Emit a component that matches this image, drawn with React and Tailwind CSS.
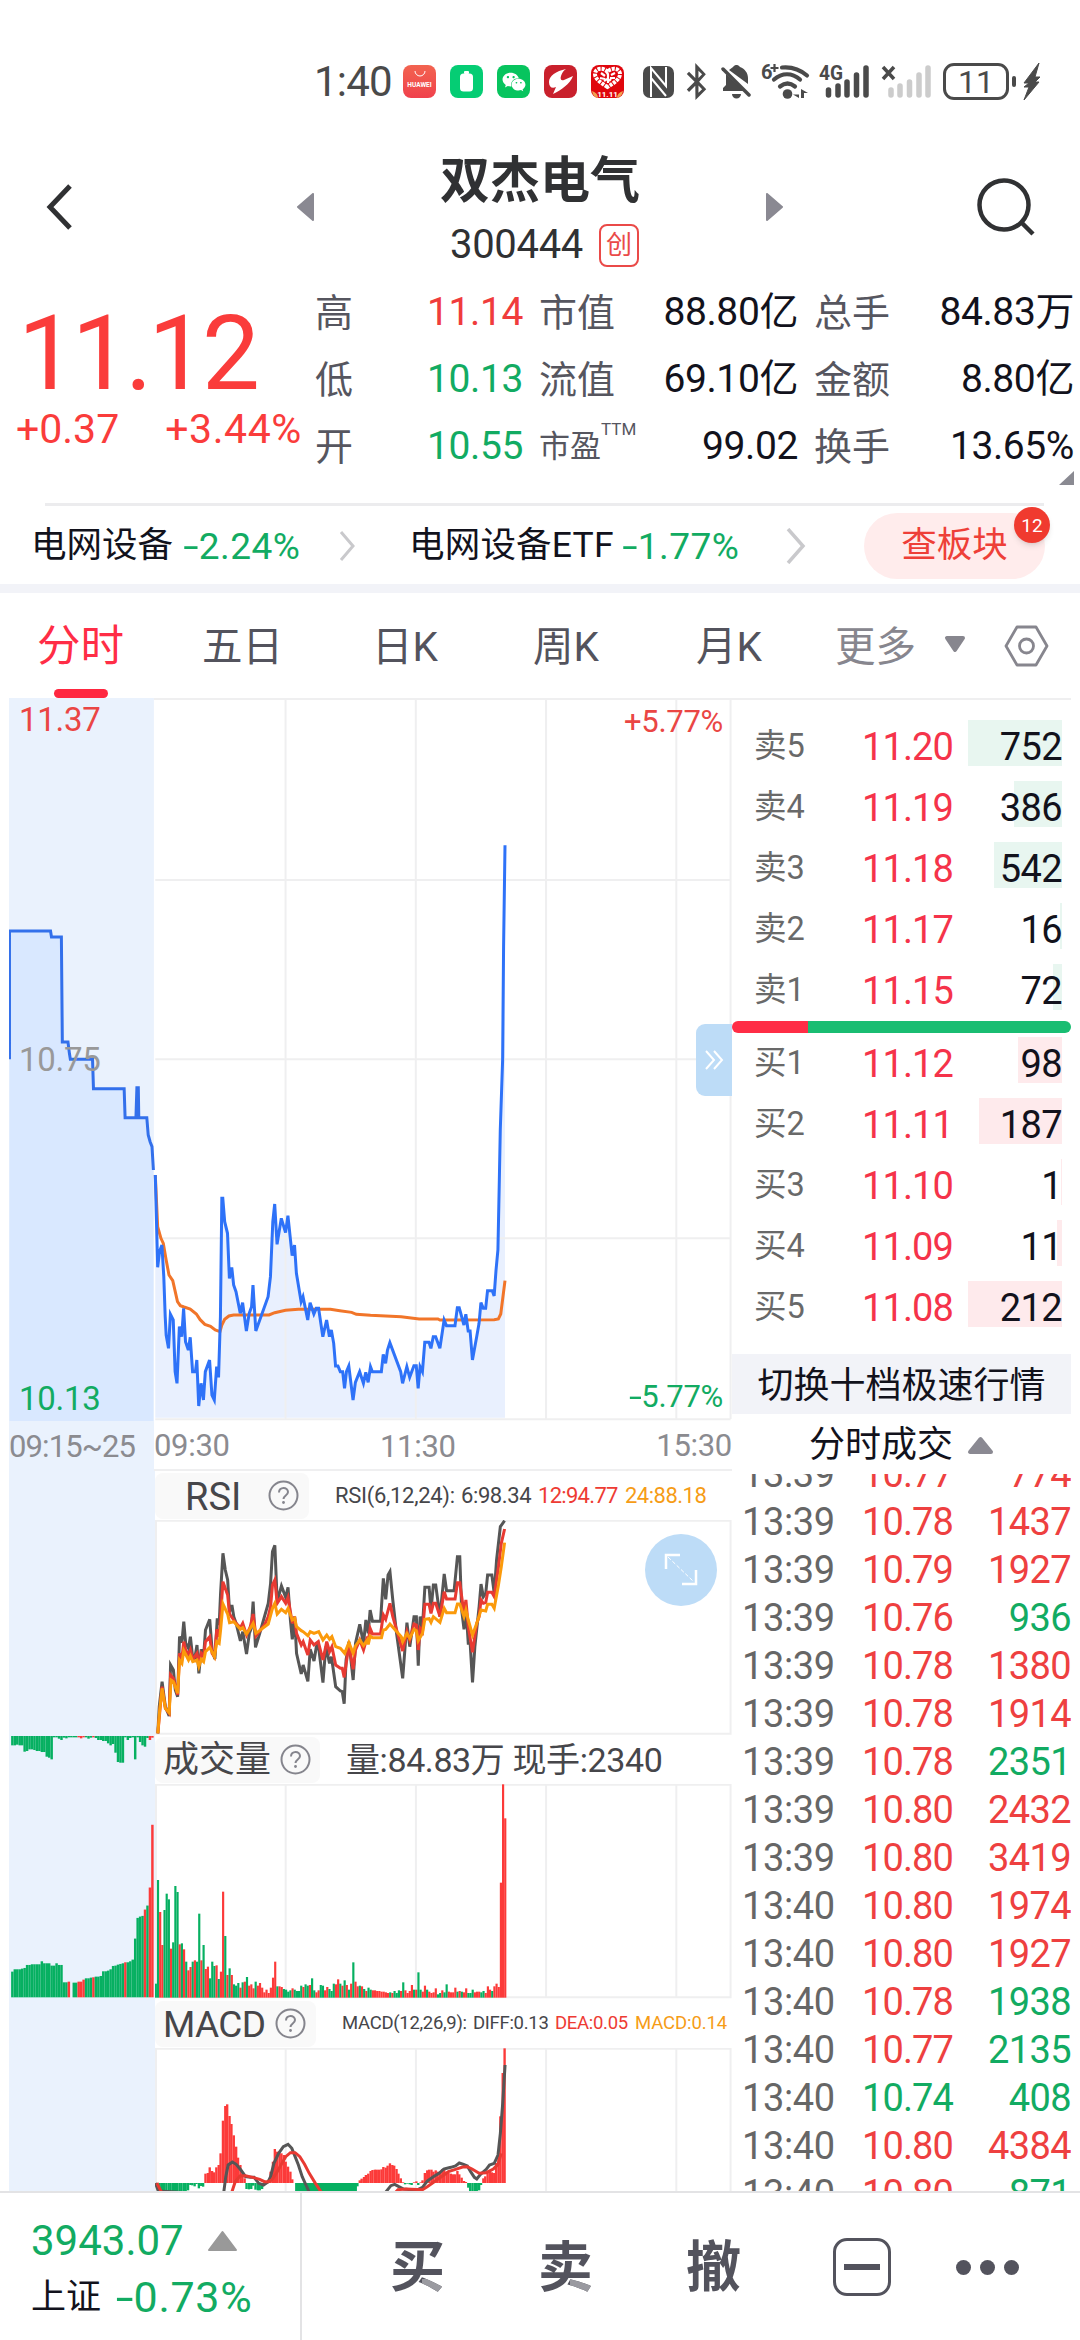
import { FaWeixin, FaBluetoothB } from "react-icons/fa";

const stats = [
  [
    { label: "高", value: "11.14", color: "text-[#f03c3c]" },
    { label: "低", value: "10.13", color: "text-[#12ab62]" },
    { label: "开", value: "10.55", color: "text-[#12ab62]" },
  ],
  [
    { label: "市值", value: "88.80亿", color: "text-[#12121c]" },
    { label: "流值", value: "69.10亿", color: "text-[#12121c]" },
    { label: "市盈", sup: "TTM", value: "99.02", color: "text-[#12121c]" },
  ],
  [
    { label: "总手", value: "84.83万", color: "text-[#12121c]" },
    { label: "金额", value: "8.80亿", color: "text-[#12121c]" },
    { label: "换手", value: "13.65%", color: "text-[#12121c]" },
  ],
];

const sells = [
  { label: "卖5", price: "11.20", volume: 752, bar: 94 },
  { label: "卖4", price: "11.19", volume: 386, bar: 48 },
  { label: "卖3", price: "11.18", volume: 542, bar: 68 },
  { label: "卖2", price: "11.17", volume: 16, bar: 2 },
  { label: "卖1", price: "11.15", volume: 72, bar: 9 },
];

const buys = [
  { label: "买1", price: "11.12", volume: 98, bar: 44 },
  { label: "买2", price: "11.11", volume: 187, bar: 83 },
  { label: "买3", price: "11.10", volume: 1, bar: 1 },
  { label: "买4", price: "11.09", volume: 11, bar: 5 },
  { label: "买5", price: "11.08", volume: 212, bar: 94 },
];

const ticks = [
  ["13:39", "10.77", 774, "r", "r"],
  ["13:39", "10.78", 1437, "r", "r"],
  ["13:39", "10.79", 1927, "r", "r"],
  ["13:39", "10.76", 936, "r", "g"],
  ["13:39", "10.78", 1380, "r", "r"],
  ["13:39", "10.78", 1914, "r", "r"],
  ["13:39", "10.78", 2351, "r", "g"],
  ["13:39", "10.80", 2432, "r", "r"],
  ["13:39", "10.80", 3419, "r", "r"],
  ["13:40", "10.80", 1974, "r", "r"],
  ["13:40", "10.80", 1927, "r", "r"],
  ["13:40", "10.78", 1938, "r", "g"],
  ["13:40", "10.77", 2135, "r", "g"],
  ["13:40", "10.74", 408, "g", "g"],
  ["13:40", "10.80", 4384, "r", "r"],
  ["13:40", "10.80", 871, "r", "g"],
];

const tickColors = { r: "text-[#ee4040]", g: "text-[#12ab62]" };

const RED = "#fc3a39";
const GREEN = "#06b061";

// price chart series, x runs 19..1551
const auctionLine =
  "20,538 20,153 107,153 109,171 130,171 132,486 144,486 147,520 149,538 196,538 198,626 263,626 265,713 288,713 290,623 293,623 294,713 311,713 314,765 318,785 322,800 325,870";

const priceLine =
  "329,135 332,300 334,412 338,365 343,345 347,440 350,560 352,615 357,655 361,553 367,570 371,725 375,760 380,590 385,620 389,535 393,635 399,660 403,622 408,725 414,725 417,690 421,828 426,760 431,810 435,725 444,690 449,795 454,810 459,710 463,742 467,560 470,205 472,205 476,275 482,310 486,445 491,412 495,465 500,485 509,550 514,518 522,603 528,550 533,530 536,465 542,603 568,500 573,440 578,275 582,222 587,343 596,265 605,308 610,257 619,377 624,345 628,430 638,515 642,500 652,570 657,518 665,552 670,535 675,535 684,620 692,570 698,620 702,600 707,640 711,708 716,708 721,725 726,725 730,775 734,725 739,708 748,810 753,757 762,725 770,760 775,727 780,757 785,710 789,725 808,725 812,673 817,700 821,660 826,638 849,725 853,760 862,710 868,742 877,707 882,707 886,775 890,710 895,725 900,637 909,637 913,655 918,620 923,620 932,655 941,570 946,587 964,587 969,533 973,533 983,585 987,553 992,603 996,603 1001,690 1010,620 1015,580 1019,518 1024,535 1029,535 1033,482 1043,482 1047,498 1051,420 1055,360 1058,150 1060,0 1065,-212 1067,-550 1070,-854";

const averageLine =
  "329,135 334,290 341,325 346,340 352,390 358,435 366,452 376,515 382,527 390,531 403,537 416,552 424,569 434,583 446,589 456,600 466,605 470,585 476,568 485,558 495,555 570,555 582,548 605,541 632,538 700,538 720,542 745,547 755,553 785,556 850,560 888,567 928,567 932,570 1047,569 1056,567 1061,552 1070,452";

const rsi6 =
  "334,820 337,740 343,665 350,740 358,768 361,615 367,630 371,690 376,710 380,530 385,548 389,485 393,550 399,565 403,530 408,595 412,598 417,555 421,640 426,568 431,590 435,510 444,478 449,570 455,597 460,475 464,495 467,400 472,280 477,330 482,360 486,455 491,435 495,470 500,490 509,543 514,515 522,582 528,520 532,505 536,425 541,562 550,520 560,470 568,430 573,370 577,275 582,256 587,425 596,378 605,412 610,382 615,480 619,538 624,470 628,580 638,642 642,615 652,664 657,568 665,603 670,560 674,552 684,668 690,560 698,610 702,590 711,680 721,693 725,695 729,731 733,600 739,545 748,660 753,550 762,493 770,550 775,480 780,520 784,450 789,484 806,484 812,355 817,418 822,345 826,335 832,420 840,520 853,655 862,488 868,560 877,470 882,470 886,617 890,470 895,500 900,382 909,382 913,450 918,375 923,375 932,470 941,342 946,392 962,392 969,290 974,290 978,450 983,508 987,440 992,550 996,550 1001,667 1006,560 1015,440 1019,372 1024,410 1029,400 1033,345 1042,345 1047,400 1052,300 1060,200 1069,182";

const rsi12 =
  "334,820 343,680 350,745 358,760 361,645 367,655 376,705 380,580 385,595 389,545 393,570 399,585 403,570 408,598 417,580 421,615 426,580 431,590 435,545 444,530 449,580 454,590 459,508 464,530 467,470 472,365 482,405 486,462 500,490 509,503 514,490 522,525 530,500 536,462 542,528 560,495 568,470 573,440 577,375 582,360 587,430 596,410 605,430 610,412 619,490 624,470 628,520 638,555 642,545 652,585 657,540 665,555 674,545 684,600 692,545 698,575 703,560 711,615 721,625 725,625 729,652 739,555 748,628 753,570 762,540 770,570 778,530 780,545 784,505 789,522 806,522 812,465 817,478 826,430 832,470 853,573 862,515 868,540 877,492 882,495 886,570 890,505 895,515 900,433 909,433 913,460 918,430 923,430 932,470 941,395 946,417 964,417 969,368 974,368 983,460 987,420 992,500 1001,577 1010,490 1015,470 1019,420 1024,430 1029,428 1033,397 1042,397 1047,410 1056,320 1062,250 1069,207";

const rsi24 =
  "334,820 338,750 343,685 350,745 358,758 362,660 367,665 376,700 380,600 385,610 389,572 399,600 403,588 408,605 417,600 421,620 426,598 431,605 435,575 444,562 454,590 459,545 464,550 467,510 472,432 482,462 486,488 495,485 509,508 514,503 522,522 530,505 536,490 542,520 568,492 577,445 582,430 587,462 596,448 605,458 610,445 619,480 624,475 628,500 638,512 642,515 652,527 657,515 665,520 675,515 684,540 692,525 698,538 703,530 711,560 721,565 730,580 739,548 748,580 753,558 762,540 770,557 778,540 780,553 784,528 789,533 808,533 812,510 817,508 826,492 850,530 853,545 862,520 868,535 877,508 882,512 886,542 895,520 900,478 909,476 913,487 918,470 932,487 941,445 946,458 964,458 969,432 974,432 983,470 987,450 992,480 1001,525 1010,490 1019,450 1029,453 1033,433 1042,433 1047,445 1056,375 1062,320 1069,248";

const macdDiff =
  "329,609 335,633 473,645 478,590 483,555 492,546 500,553 510,570 520,590 530,592 538,592 548,610 558,615 568,605 573,590 580,550 590,520 600,500 610,493 618,505 625,530 632,555 640,590 648,615 656,640 815,640 828,617 836,613 845,620 855,627 870,629 885,629 895,622 905,603 918,590 930,580 940,567 955,562 965,558 973,549 982,553 990,558 997,575 1005,592 1010,597 1018,583 1030,568 1037,555 1047,550 1055,525 1060,460 1065,370 1070,255";

const macdDea =
  "332,609 343,640 490,640 498,605 508,588 520,587 535,592 550,598 560,605 568,605 575,600 585,580 595,555 605,530 615,518 625,518 635,530 645,553 655,580 668,610 682,640 836,640 843,629 860,627 895,629 905,620 920,605 935,590 950,575 965,568 980,561 990,560 1000,567 1015,580 1030,578 1045,567 1055,553 1062,520";

// g = falling, r = rising; number is the bar height
const volumeBars =
  "g42 g353 r257 r158 g263 g312 g295 r147 g166 g335 g317 r160 g163 r145 g108 r82 r92 g108 r112 g108 g252 r112 g158 r86 r93 g58 g108 g95 r97 g56 r78 r318 g185 r68 g88 r68 g40 g36 g44 r30 g46 r48 g62 r36 r40 r28 g48 r36 r44 r30 r16 r24 r14 r30 r60 r108 g34 r34 r32 g26 g24 g18 g22 r28 g24 g20 g20 g36 r32 g40 g36 r38 g58 g22 r16 r22 g38 g36 r22 r32 g26 g20 g42 r40 r55 g42 r36 g52 r38 g24 r42 g106 r48 r34 g36 r34 g26 r20 g30 g24 r22 r22 r20 r20 r18 r18 r16 r14 g16 r14 g20 g14 g22 r20 g46 r22 r14 r20 r38 g24 r24 g76 g24 r18 r36 g24 r18 r14 r16 r28 g10 g14 r22 g16 g40 r18 r16 r16 r30 g18 r20 g18 r16 r28 g14 g14 g24 r16 r18 r18 g16 g20 r14 r34 r24 g20 r34 r42 r32 r345 r640 r538";

const matchedBars =
  "g77 g84 g84 g84 g86 g88 g97 g97 g99 g99 g99 g99 g108 g102 g102 g102 g95 g95 g102 g97 g97 g45 g45 r47 g0 g44 g44 r47 r47 r53 g57 g57 g59 r60 g62 g62 g64 g78 g78 g80 g84 g94 g95 g98 g100 g102 r105 g105 g108 g113 g176 g238 g242 g244 r263 g275 r329 r517";

const unmatchedBars =
  "g28 g28 g26 g28 g28 g47 g45 g40 g40 g42 g45 g45 g48 g48 g62 g65 g70 g4 g4 g8 g12 g5 g7 g4 g4 g4 g4 r4 r7 r4 g4 g8 g5 r4 g6 g12 g12 g15 g15 g22 g28 g24 g50 g78 g80 g80 g4 g12 g6 g4 g70 g4 g18 g28 g32 g6 r12 r5";

// [x, signed height] around the zero line
const macdBars = [
  [338, -24], [343, -24], [347, -24], [352, -24], [357, -24], [361, -24], [366, -24], [370, -24],
  [375, -24], [380, -24], [384, -24], [389, -24], [393, -24], [398, -22], [403, -6], [407, -7],
  [412, -10], [416, -3], [421, -16], [426, -9], [430, -11], [435, 28], [440, 30], [444, 47], [449, 36],
  [453, 32], [458, 47], [463, 54], [467, 89], [472, 187], [477, 231], [481, 236], [486, 201],
  [490, 177], [495, 143], [500, 109], [504, 76], [509, 54], [513, 29], [518, 14], [522, -18],
  [527, -19], [532, -18], [536, -8], [541, -20], [546, -22], [550, -22], [555, -18], [559, -4],
  [564, 5], [569, 10], [573, 34], [578, 64], [582, 102], [587, 94], [592, 89], [596, 89], [601, 84],
  [605, 64], [610, 49], [615, 34], [619, 11], [757, -10], [762, 8], [766, 13], [771, 18], [775, 24],
  [780, 28], [785, 36], [789, 39], [794, 40], [798, 40], [803, 40], [808, 41], [812, 48], [817, 46],
  [821, 52], [826, 59], [831, 54], [835, 52], [840, 42], [844, 28], [849, 14], [854, 2], [858, -4],
  [863, -2], [868, -4], [872, -6], [877, 2], [882, 5], [886, -6], [891, 2], [895, 8], [900, 30],
  [905, 38], [909, 40], [914, 40], [918, 34], [923, 38], [927, 34], [932, 32], [937, 42], [941, 40],
  [946, 34], [950, 30], [955, 28], [960, 26], [964, 26], [969, 36], [973, 26], [978, 16], [983, 6],
  [987, 3], [992, -14], [996, -24], [1001, -24], [1006, -24], [1010, -24], [1015, -22], [1019, -6],
  [1024, 14], [1028, 20], [1033, 32], [1038, 36], [1042, 32], [1047, 30], [1051, 60], [1056, 90],
  [1060, 200], [1065, 330], [1069, 404],
];

function Bars({ data, x, step, width, base, down }) {
  return data.split(" ").map((item, i) => {
    const height = Number(item.slice(1));
    return (
      <rect
        key={i}
        x={x + i * step}
        y={down ? base : base - height}
        width={width}
        height={height}
        fill={item[0] === "r" ? RED : GREEN}
      />
    );
  });
}

function Line({ points, color, width = 3 }) {
  return (
    <polyline
      points={points}
      fill="none"
      stroke={color}
      strokeWidth={width}
      vectorEffect="non-scaling-stroke"
    />
  );
}

function Grid({ x, y1, y2 }) {
  return x.map((n) => (
    <line key={n} x1={n} x2={n} y1={y1} y2={y2} stroke="#efeff0" strokeWidth="2" vectorEffect="non-scaling-stroke" />
  ));
}

// negative value with a wide minus sign
function Negative({ children }) {
  return (
    <>
      <span className="mx-[2px] inline-block scale-x-[1.5]">-</span>
      {children}
    </>
  );
}

function StatusBar() {
  return (
    <div className="flex h-[100px] shrink-0 items-end pl-[314px] text-[#4a4a4a]">
      <div className="flex h-[37px] items-center">
        <span className="w-[89px] text-[42px] leading-none tracking-[-0.8px]">1:40</span>
        <div className="flex h-[33px] w-[33px] flex-col items-center rounded-[8px] bg-gradient-to-b from-[#f26350] to-[#f0404c] pt-[6px]">
          <svg className="h-[6px] w-[12px]" viewBox="0 0 12 6" fill="none" stroke="#fff">
            <path d="M1 0a5 5 0 0 0 10 0" />
          </svg>
          <span className="mt-[5px] text-[6.5px] font-bold leading-none text-white">HUAWEI</span>
        </div>
        <div className="ml-[14px] flex h-[33px] w-[33px] items-center justify-center rounded-[8px] bg-[#05cd74]">
          <svg className="h-[21px] w-[13px]" viewBox="0 0 13 21" fill="#fff">
            <rect x="4" width="5" height="3" rx="1" />
            <rect y="2.5" width="13" height="18" rx="3.5" />
          </svg>
        </div>
        <div className="ml-[14px] flex h-[33px] w-[33px] items-center justify-center rounded-[8px] bg-[#07c45e]">
          <FaWeixin className="h-[24px] w-[24px] text-white" />
        </div>
        <svg className="ml-[14px] h-[33px] w-[33px]" viewBox="0 0 33 33">
          <rect width="33" height="33" rx="8" fill="#c9202c" />
          <path d="M22 4C12 6 5 11 5 17c0 5 3 7 7 5l-3 7c8-4 17-10 20-18l-9 4c-3 1-4-1-3-4 1-3 2-5 5-7z" fill="#fff" />
        </svg>
        <svg className="ml-[14px] h-[33px] w-[33px] overflow-visible" viewBox="0 0 33 33">
          <rect width="33" height="33" rx="8" fill="#e0060d" />
          <path d="M1 26q6 2 6 7h19q0-5 6-7-1 7-8 7H8q-6 0-7-7z" fill="#f0a050" />
          <path
            d="M16.5 22C10 18 4 14 4 9c0-6 9-7 12.5-2C20 2 29 3 29 9c0 5-6 9-12.5 13z"
            fill="none"
            stroke="#fff"
            strokeWidth="4"
            strokeDasharray="3 1"
          />
          <path d="M10 8l4 3m-5 2l5 1m3-5v9m3-8l4-2m-5 5h5m-11 3l3-2m4 0l-2 2" stroke="#fff" strokeWidth="2.2" />
          <text x="16.5" y="31.5" textAnchor="middle" fontSize="8" fontWeight="bold" fill="#fff">
            11.11
          </text>
        </svg>
        <svg className="ml-[19px] h-[32px] w-[31px]" viewBox="0 0 31 32">
          <rect width="31" height="32" rx="7" fill="#4a4a4a" />
          <path d="M8 31V2l15 18V1M8 12l15 18" fill="none" stroke="#fff" strokeWidth="2" />
        </svg>
        <FaBluetoothB className="ml-[9px] h-[37px] w-[27px]" />
        <svg className="ml-[11px] h-[34px] w-[31px]" viewBox="0 0 31 34" fill="#4a4a4a">
          <path d="M12 2a4 4 0 0 1 7 0c5 2 8 6 8 11v6L8 5zM5 9l18 17H2v-3l3-3zM11 29h9a4.5 4.5 0 0 1-9 0z" />
          <path d="M2 4l26 26" stroke="#4a4a4a" strokeWidth="3.5" strokeLinecap="round" />
        </svg>
        <svg className="ml-[9px] h-[35px] w-[48px] overflow-visible" viewBox="0 0 48 35">
          <text x="0" y="15" fontSize="20" fontWeight="bold" fill="#4a4a4a">6</text>
          <path d="M9.5 4h8M13.5 0v8" stroke="#4a4a4a" strokeWidth="2.2" />
          <g fill="none" stroke="#4a4a4a" strokeWidth="4.2" strokeLinecap="round">
            <path d="M21 3.5c10-1 18 2 25 8M13 15.5c8-7 18-7 26 0M19 22.5c5-4 10-4 15 0" />
          </g>
          <circle cx="26.5" cy="30" r="4.8" fill="#4a4a4a" />
          <path d="M38 25v9l-6-3.5h6zM40 25l7 4h-4v5l-3 0z" fill="#4a4a4a" />
        </svg>
        <svg className="ml-[10px] h-[35px] w-[50px] overflow-visible" viewBox="0 0 50 35">
          <text x="0" y="16" fontSize="20" fontWeight="bold" fill="#4a4a4a" textLength="24" lengthAdjust="spacingAndGlyphs">
            4G
          </text>
          <path d="M9.5 26v5M19 22v9M28 18v13M37.5 11v20M47 4v27" stroke="#4a4a4a" strokeWidth="5.5" strokeLinecap="round" />
        </svg>
        <svg className="ml-[12px] h-[35px] w-[50px]" viewBox="0 0 50 35">
          <path d="M2 3l11 12M13 3L2 15" stroke="#4a4a4a" strokeWidth="3.5" />
          <path d="M10 26v5M19 22v9M28.5 18v13M38 11v20M47 4v27" stroke="#ccc" strokeWidth="5.5" strokeLinecap="round" />
        </svg>
        <div className="ml-[12px] flex h-[37px] w-[66px] items-center justify-center rounded-[11px] border-[3px] border-[#4a4a4a] text-[32px] leading-none">
          11
        </div>
        <div className="ml-[3px] h-[11px] w-[4px] rounded-sm bg-[#4a4a4a]" />
        <svg className="ml-[7px] h-[37px] w-[18px]" viewBox="0 0 18 37">
          <path d="M16 0L1 20h5l-5 4h5L1 37l15-18h-4l5-5h-5z" fill="#4a4a4a" stroke="#4a4a4a" />
        </svg>
      </div>
    </div>
  );
}

function Header() {
  return (
    <div className="flex h-[180px] shrink-0 items-center pl-[46px] pr-[45px] pt-[34px] text-[#303133]">
      <svg className="h-[46px] w-[26px]" viewBox="0 0 26 46" fill="none" stroke="#303133" strokeWidth="5">
        <path d="M24 2L4 23l20 21" />
      </svg>
      <svg className="ml-[224px] h-[28px] w-[19px]" viewBox="0 0 19 28">
        <path d="M17 1v26L2 14z" fill="#8a8992" stroke="#8a8992" strokeWidth="2" strokeLinejoin="round" />
      </svg>
      <div className="flex h-[146px] w-[450px] flex-col items-center pt-[17px]">
        <h1 className="whitespace-nowrap text-[50px] font-bold leading-[60px]">双杰电气</h1>
        <div className="mt-[11px] flex items-center gap-[16px] pl-[9px]">
          <span className="text-[40px] leading-[46px] tracking-[-0.3px]">300444</span>
          <span className="flex h-[43px] w-[40px] items-center justify-center rounded-[8px] border-[2px] border-[#ea4a48] text-[26px] leading-none text-[#ea4a48]">
            创
          </span>
        </div>
      </div>
      <svg className="h-[28px] w-[19px]" viewBox="0 0 19 28">
        <path d="M2 1v26l15-13z" fill="#8a8992" stroke="#8a8992" strokeWidth="2" strokeLinejoin="round" />
      </svg>
      <svg className="ml-auto h-[58px] w-[58px]" viewBox="0 0 58 58" fill="none" stroke="#303133" strokeWidth="4.5">
        <circle cx="27" cy="27" r="24.5" />
        <path d="M45 45l11 11" />
      </svg>
    </div>
  );
}

function Quote() {
  return (
    <div className="flex h-[223px] shrink-0">
      <div className="w-[315px] text-[#fa3c3b]">
        <div className="pl-[18px] pt-[24px] text-[103px] leading-[100px] tracking-[-4.2px]">11.12</div>
        <div className="mt-[2px] flex justify-between pl-[16px] pr-[13px] text-[41px] leading-[46px]">
          <span>+0.37</span>
          <span className="tracking-[0.6px]">+3.44%</span>
        </div>
      </div>
      <div className="mt-[-1px] flex flex-1 gap-[16px] pr-[6px]">
        {stats.map((column, i) => (
          <div
            key={i}
            className={i === 0 ? "w-[208px]" : i === 1 ? "w-[259px]" : "w-[260px]"}
          >
            {column.map((item) => (
              <div key={item.label} className="flex h-[67px] items-center justify-between text-[39px] leading-none">
                {item.sup ? (
                  <span className="flex text-[31px] leading-[40px] text-[#56565f]">
                    {item.label}
                    <sup className="top-0 mt-[-11px] text-[17px] leading-[26px]">{item.sup}</sup>
                  </span>
                ) : (
                  <span className="text-[38px] text-[#56565f]">{item.label}</span>
                )}
                <span className={`tracking-[-0.4px] ${item.color}`}>{item.value}</span>
              </div>
            ))}
            {i === 2 && (
              <svg className="ml-auto mt-[-9px] h-[14px] w-[15px]" viewBox="0 0 15 14">
                <path d="M15 0v14H0z" fill="#8a8a92" />
              </svg>
            )}
          </div>
        ))}
      </div>
    </div>
  );
}

function Sectors() {
  return (
    <div className="h-[90px] shrink-0 border-b-[9px] border-[#f2f3f8]">
      <div className="ml-[45px] mr-[36px] h-[3px] bg-[#ececee]" />
      <div className="flex h-[78px] items-center pl-[31px] pt-[2px] text-[35.5px] leading-none text-[#12121c]">
        <span className="w-[142px] whitespace-nowrap">电网设备</span>
        <span className="ml-[11px] w-[118px] whitespace-nowrap text-[37px] tracking-[0.5px] text-[#12ab62]">
          <Negative>2.24%</Negative>
        </span>
        <svg className="ml-[37px] h-[30px] w-[17px]" viewBox="0 0 17 30" fill="none" stroke="#c9c9cc" strokeWidth="3">
          <path d="M2 1l12 14L2 29" />
        </svg>
        <span className="ml-[53px] w-[206px] whitespace-nowrap tracking-[0.2px]">电网设备ETF</span>
        <span className="ml-[8px] w-[118px] whitespace-nowrap text-[37px] tracking-[0.5px] text-[#12ab62]">
          <Negative>1.77%</Negative>
        </span>
        <svg className="ml-[45px] h-[36px] w-[20px]" viewBox="0 0 20 36" fill="none" stroke="#c9c9cc" strokeWidth="3.5">
          <path d="M2 1l15 17L2 35" />
        </svg>
        <div className="relative ml-[58px] flex h-[66px] w-[181px] items-center justify-center rounded-full bg-[#ffecec] text-[#ee3f38]">
          查板块
          <span className="absolute right-[-5px] top-[-6px] flex h-[36px] w-[36px] items-center justify-center rounded-full bg-[#f03a2f] text-[19px] text-white shadow-md">
            12
          </span>
        </div>
      </div>
    </div>
  );
}

function Tabs() {
  return (
    <div className="mx-[9px] flex h-[105px] shrink-0 items-start pl-[28px] pt-[27px] text-[40.5px] leading-[54px] text-[#53535d]">
      <div className="flex w-[165px] flex-col items-start text-[#ff2d46]">
        <span className="text-[43.5px]">分时</span>
        <span className="ml-[17px] mt-[15px] h-[9px] w-[54px] rounded-full bg-[#ff2740]" />
      </div>
      <span className="w-[170px]">五日</span>
      <span className="w-[161px]">日K</span>
      <span className="w-[163px]">周K</span>
      <span className="w-[139px]">月K</span>
      <span className="w-[109px] text-[#87868e]">更多</span>
      <svg className="mt-[16px] h-[17px] w-[22px]" viewBox="0 0 22 17">
        <path d="M3 2h16l-8 12z" fill="#87868e" stroke="#87868e" strokeWidth="4" strokeLinejoin="round" />
      </svg>
      <svg className="ml-[38px] mt-[5px] h-[42px] w-[45px]" viewBox="0 0 45 42" fill="none" stroke="#87868e" strokeWidth="2.8">
        <path d="M13 2h19l11 19-11 19H13L2 21z" strokeLinejoin="round" />
        <circle cx="22.5" cy="21" r="7" />
      </svg>
    </div>
  );
}

function PriceChart() {
  return (
    <div className="relative h-[724px] w-[723px] text-[33px] leading-none tracking-[-0.3px]">
      <svg className="h-[724px] w-[723px]" viewBox="19 0 1532 2172" preserveAspectRatio="none">
        <rect x="19" y="0" width="307" height="2172" fill="#eaf2fd" />
        <g transform="translate(0 546)">
          <polygon points={`${auctionLine} 325,1623 20,1623`} fill="#d9e8ff" />
          <Line points={auctionLine} color="#3370eb" />
        </g>
        <g transform="translate(0 1296)">
          <polygon points={`${priceLine} 1070,863 329,863`} fill="#e9f0fe" />
        </g>
        <Grid x={[605, 881, 1157, 1433, 1548]} y1="6" y2="2163" />
        <path
          d="M329 546H1548M329 1084H1548M329 1621H1548M329 2164H1548M326 3H1551"
          fill="none"
          stroke="#efeff0"
          strokeWidth="2"
          vectorEffect="non-scaling-stroke"
        />
        <g transform="translate(0 1296)">
          <Line points={averageLine} color="#f17529" />
          <Line points={priceLine} color="#2e72f8" />
        </g>
      </svg>
      <span className="absolute left-[10px] top-[5px] text-[#ea4644]">11.37</span>
      <span className="absolute left-[10px] top-[345px] text-[#999]">10.75</span>
      <span className="absolute left-[10px] top-[684px] text-[#12ab62]">10.13</span>
      <span className="absolute right-[9px] top-[8px] text-[31px] text-[#ea4644]">+5.77%</span>
      <span className="absolute right-[9px] top-[683px] text-[31px] text-[#12ab62]">
        <Negative>5.77%</Negative>
      </span>
      <div className="absolute right-0 top-[326px] flex h-[72px] w-[36px] items-center justify-center rounded-l-[9px] bg-[#bddcf7]">
        <svg className="h-[20px] w-[20px]" viewBox="0 0 20 20" fill="none" stroke="#fff" strokeWidth="2">
          <path d="M2 1l8 9-8 9M10 1l8 9-8 9" />
        </svg>
      </div>
    </div>
  );
}

function Help() {
  return (
    <svg className="h-[31px] w-[31px] shrink-0" viewBox="0 0 31 31" fill="none" stroke="#85858d">
      <circle cx="15.5" cy="15.5" r="14" strokeWidth="2" />
      <path d="M11 12.5c0-6 9-6 9-.5 0 3.5-4.5 3.5-4.5 7" strokeWidth="2" />
      <circle cx="15.5" cy="22.5" r="1.4" fill="#85858d" stroke="none" />
    </svg>
  );
}

function Indicators() {
  return (
    <div className="flex w-[723px] flex-1">
      <div className="w-[146px] bg-[#eaf2fd] pt-[265px]">
        <svg className="block h-[263px] w-[146px]" viewBox="19 49 309 788" preserveAspectRatio="none">
          <Bars data={unmatchedBars} x={23.5} step={5.2} width={5.2} base={49} down />
          <Bars data={matchedBars} x={23.5} step={5.2} width={5.2} base={832} />
        </svg>
      </div>
      <div className="w-[577px]">
        <div className="flex h-[49px] items-center text-[#46464a]">
          <div className="flex h-[46px] w-[154px] items-center rounded-[8px] bg-[#f9f9f9] pl-[30px] text-[38px] leading-none">
            <span className="w-[83px] pt-[2px]">RSI</span>
            <Help />
          </div>
          <div className="flex whitespace-nowrap pl-[26px] text-[22px] leading-none">
            <span className="w-[126px] tracking-[-0.3px]">RSI(6,12,24):</span>
            <span className="w-[77px] tracking-[-0.4px]">6:98.34</span>
            <span className="w-[87px] tracking-[-0.7px] text-[#ee3b33]">12:94.77</span>
            <span className="tracking-[-0.5px] text-[#f69c16]">24:88.18</span>
          </div>
        </div>
        <div className="relative h-[215px]">
          <svg className="block h-[215px] w-[577px]" viewBox="328 180 1223 645" preserveAspectRatio="none">
            <rect x="330" y="182" width="1218" height="639" fill="none" stroke="#efeff0" strokeWidth="2" vectorEffect="non-scaling-stroke" />
            <Line points={rsi6} color="#565656" />
            <Line points={rsi12} color="#e83a32" />
            <Line points={rsi24} color="#fb9a0b" />
          </svg>
          <div className="absolute right-[15px] top-[14px] flex h-[72px] w-[72px] items-center justify-center rounded-full bg-[#bddcf7]">
            <svg className="h-[34px] w-[34px]" viewBox="0 0 34 34" fill="none" stroke="#fff">
              <path d="M2 16V2h14M18 31h14V17" strokeWidth="2.5" />
              <path d="M4 4l26 25" strokeDasharray="4 2" />
            </svg>
          </div>
        </div>
        <div className="flex h-[49px] items-center text-[#46464a]">
          <div className="flex h-[46px] w-[165px] items-center rounded-[8px] bg-[#f9f9f9] pl-[8px] text-[36px] leading-none">
            <span className="w-[117px]">成交量</span>
            <Help />
          </div>
          <span className="whitespace-nowrap pl-[26px] text-[34px] leading-none tracking-[-0.4px]">量:84.83万 现手:2340</span>
        </div>
        <svg className="block h-[215px] w-[577px]" viewBox="328 192 1223 645" preserveAspectRatio="none">
          <rect x="330" y="194" width="1218" height="638" fill="none" stroke="#efeff0" strokeWidth="2" vectorEffect="non-scaling-stroke" />
          <Grid x={[605, 881, 1157, 1433]} y1="194" y2="832" />
          <Bars data={volumeBars} x={327.5} step={4.6} width={4.6} base={833} />
        </svg>
        <div className="flex h-[49px] items-center text-[#46464a]">
          <div className="flex h-[46px] w-[161px] items-center rounded-[8px] bg-[#f9f9f9] pl-[8px] text-[37px] leading-none">
            <span className="w-[112px] pt-[2px] tracking-[-0.6px]">MACD</span>
            <Help />
          </div>
          <div className="flex whitespace-nowrap pl-[26px] text-[18.5px] leading-none tracking-[-0.3px]">
            <span className="w-[131px]">MACD(12,26,9):</span>
            <span className="w-[82px]">DIFF:0.13</span>
            <span className="w-[80px] text-[#ee3b33]">DEA:0.05</span>
            <span className="tracking-[-0.1px] text-[#f69c16]">MACD:0.14</span>
          </div>
        </div>
        <svg className="block h-[143px] w-[577px]" viewBox="328 204 1223 429" preserveAspectRatio="none">
          <path
            d="M330 640V206H1548V640"
            fill="none"
            stroke="#efeff0"
            strokeWidth="2"
            vectorEffect="non-scaling-stroke"
          />
          <Grid x={[605, 881, 1157, 1433]} y1="206" y2="640" />
          {macdBars.map(([x, h]) => (
            <rect
              key={x}
              x={x - 2.5}
              y={h > 0 ? 609 - h : 609}
              width="5"
              height={Math.abs(h)}
              fill={h > 0 ? RED : GREEN}
            />
          ))}
          <rect x="625" y="609" width="131" height="24" fill={GREEN} />
          <Line points={macdDiff} color="#565656" />
          <Line points={macdDea} color="#e83a32" />
        </svg>
      </div>
    </div>
  );
}

function OrderRow({ order, barColor }) {
  return (
    <div className="relative flex h-[61px] items-start justify-end pr-[9px]">
      <div className={`h-[46px] ${barColor}`} style={{ width: order.bar }} />
      <div className="absolute inset-x-0 top-0 flex h-[53px] items-center pl-[22px] pr-[9px] leading-none">
        <span className="w-[108px] text-[32.5px] text-[#696969]">{order.label}</span>
        <span className="text-[38px] tracking-[-0.9px] text-[#f5334a]">{order.price}</span>
        <span className="ml-auto text-[38px] tracking-[-0.6px] text-[#12121c]">{order.volume}</span>
      </div>
    </div>
  );
}

function OrderBook() {
  return (
    <div className="flex w-[339px] flex-col">
      <div className="h-[2px] shrink-0 bg-[#efeff0]" />
      <div className="h-[303px] shrink-0 pt-[20px]">
        {sells.map((order) => (
          <OrderRow key={order.label} order={order} barColor="bg-[#e8f6f0]" />
        ))}
      </div>
      <div className="mt-[18px] flex h-[12px] shrink-0 overflow-hidden rounded-full">
        <div className="w-[76px] bg-[#ff2d46]" />
        <div className="flex-1 bg-[#19bd72]" />
      </div>
      <div className="h-[321px] shrink-0 pt-[4px]">
        {buys.map((order) => (
          <OrderRow key={order.label} order={order} barColor="bg-[#feeaec]" />
        ))}
      </div>
      <div className="flex h-[60px] shrink-0 items-center justify-center bg-[#f2f3f8] pt-[3px] text-[36px] leading-none text-[#12121c]">
        切换十档极速行情
      </div>
      <div className="flex h-[60px] shrink-0 items-center justify-center gap-[14px] pt-[2px] text-[36px] leading-none text-[#12121c]">
        分时成交
        <svg className="h-[20px] w-[27px]" viewBox="0 0 27 20">
          <path d="M3 17h21L13.5 4z" fill="#8a8992" stroke="#8a8992" strokeWidth="4" strokeLinejoin="round" />
        </svg>
      </div>
      <div className="min-h-0 flex-1 overflow-hidden">
        <div className="mt-[-24px]">
          {ticks.map(([time, price, volume, priceColor, volumeColor], i) => (
            <div key={i} className="flex h-[48px] items-center pl-[10px] text-[38px] leading-none">
              <span className="w-[120px] tracking-[-0.4px] text-[#666]">{time}</span>
              <span className={`tracking-[-0.9px] ${tickColors[priceColor]}`}>{price}</span>
              <span className={`ml-auto tracking-[-0.6px] ${tickColors[volumeColor]}`}>{volume}</span>
            </div>
          ))}
        </div>
      </div>
    </div>
  );
}

// the last stroke of the glyph is tinted lighter
function TradeButton({ children }) {
  return (
    <span className="bg-[linear-gradient(#9a9aa0,#9a9aa0),linear-gradient(#53535d,#53535d)] bg-[length:41%_28%,100%_100%] bg-[position:100%_100%,0_0] bg-no-repeat bg-clip-text text-transparent">
      {children}
    </span>
  );
}

function Footer() {
  return (
    <div className="flex h-[149px] shrink-0 border-t-[2px] border-[#e3e3e5]">
      <div className="w-[302px] border-r-[2px] border-[#e3e3e5] pl-[31px] pt-[24px] text-[#12ab62]">
        <div className="flex h-[48px] items-center text-[42px] leading-none">
          <span className="w-[176px]">3943.07</span>
          <svg className="h-[22px] w-[31px]" viewBox="0 0 31 22">
            <path d="M2 20h27L15.5 2z" fill="#999" stroke="#999" strokeWidth="2" strokeLinejoin="round" />
          </svg>
        </div>
        <div className="mt-[8px] flex h-[48px] items-center leading-none">
          <span className="w-[86px] text-[35px] text-[#12121c]">上证</span>
          <span className="whitespace-nowrap text-[43px] tracking-[0.7px]">
            <Negative>0.73%</Negative>
          </span>
        </div>
      </div>
      <div className="flex h-[148px] items-center text-[55px] font-bold leading-none text-[#53535d]">
        <div className="ml-[88px] flex gap-[93px]">
          <TradeButton>买</TradeButton>
          <TradeButton>卖</TradeButton>
          <span>撤</span>
        </div>
        <div className="ml-[92px] flex h-[58px] w-[58px] items-center justify-center rounded-[14px] border-[3px] border-[#53535d]">
          <div className="h-[6px] w-[36px] bg-[#53535d]" />
        </div>
        <div className="ml-[65px] flex gap-[9px]">
          <div className="h-[15px] w-[15px] rounded-full bg-[#53535d]" />
          <div className="h-[15px] w-[15px] rounded-full bg-[#53535d]" />
          <div className="h-[15px] w-[15px] rounded-full bg-[#53535d]" />
        </div>
      </div>
    </div>
  );
}

export default function App() {
  return (
    <div className="flex h-[2340px] w-[1080px] flex-col overflow-hidden bg-white font-[Roboto,'Noto_Sans_CJK_SC',sans-serif]">
      <StatusBar />
      <Header />
      <Quote />
      <Sectors />
      <Tabs />
      <div className="flex h-[1493px] shrink-0 pl-[9px]">
        <div className="flex w-[723px] flex-col">
          <PriceChart />
          <div className="relative flex h-[49px] shrink-0 items-center text-[31px] leading-none tracking-[-0.3px] text-[#8b8b90]">
            <div className="flex h-full w-[145px] items-center bg-[#eaf2fd] tracking-[-0.9px]">09:15~25</div>
            <div className="flex h-full flex-1 items-center justify-between border-b-[2px] border-[#efeff0]">
              <span>09:30</span>
              <span>15:30</span>
            </div>
            <span className="absolute left-[371px]">11:30</span>
          </div>
          <Indicators />
        </div>
        <OrderBook />
      </div>
      <Footer />
    </div>
  );
}
